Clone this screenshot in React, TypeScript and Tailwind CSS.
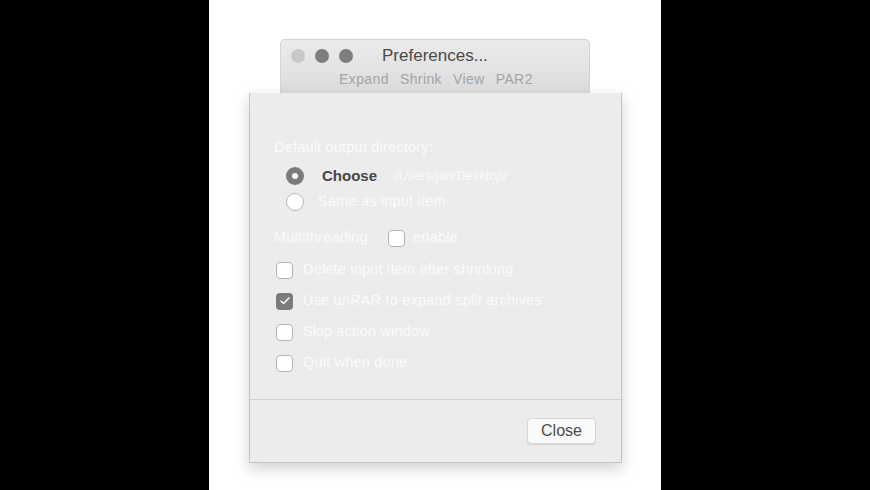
import { Check } from 'lucide-react'

const font = { fontFamily: '"Liberation Sans", Arial, sans-serif' }

function Radio({ checked }: { checked?: boolean }) {
  return checked ? (
    <span className="flex h-[18px] w-[18px] shrink-0 items-center justify-center rounded-full bg-[#7b7b7b]">
      <span className="h-[6px] w-[6px] rounded-full bg-white" />
    </span>
  ) : (
    <span className="block h-[18px] w-[18px] shrink-0 rounded-full border border-[#b8b8b8] bg-white" />
  )
}

function Box({ checked }: { checked?: boolean }) {
  return checked ? (
    <span className="flex h-[17px] w-[17px] shrink-0 items-center justify-center rounded-[4px] bg-[#7b7b7b]">
      <Check className="h-3 w-3 text-white" strokeWidth={3} />
    </span>
  ) : (
    <span className="block h-[17px] w-[17px] shrink-0 rounded-[4px] border border-[#b3b3b3] bg-white" />
  )
}

const options = [
  { label: 'Delete input item after shrinking', checked: false },
  { label: 'Use unRAR to expand split archives', checked: true },
  { label: 'Skip action window', checked: false },
  { label: 'Quit when done', checked: false },
]

export default function App() {
  return (
    <div className="flex h-[490px] w-[870px] justify-center bg-black" style={font}>
      <div className="flex h-full w-[452px] flex-col bg-white">
        {/* window title bar */}
        <div className="ml-[71px] mt-[39px] h-[54px] w-[310px] rounded-t-[5px] border border-b-0 border-[#d4d4d4] bg-gradient-to-b from-[#ebebeb] to-[#dcdcdc]">
          <div className="flex h-[31px] items-center pl-[10px]">
            <span className="h-[14px] w-[14px] rounded-full bg-[#c9c9c9]" />
            <span className="ml-[10px] h-[14px] w-[14px] rounded-full bg-[#7e7e7e]" />
            <span className="ml-[10px] h-[14px] w-[14px] rounded-full bg-[#7e7e7e]" />
            <span className="ml-[29px] text-[17px] text-[#4a4a4a]">Preferences...</span>
          </div>
          <div className="-mt-[2px] flex gap-[11px] pl-[58px] text-[14px] tracking-[0.4px] text-[#a4a4a4]">
            <span>Expand</span>
            <span>Shrink</span>
            <span>View</span>
            <span>PAR2</span>
          </div>
        </div>

        {/* sheet */}
        <div className="ml-[40px] flex h-[370px] w-[373px] flex-col border-x border-b border-[#c4c4c4] bg-[#ececec] shadow-[0_6px_14px_rgba(0,0,0,0.18)]">
          <div className="flex flex-col px-[25px] pt-[45px] text-[14.5px] tracking-[0.2px] text-[#fbfbfb]">
            <div className="-ml-[1px] leading-[18px]">Default output directory:</div>
            <div className="mt-[11px] flex h-[18px] items-center pl-[11px]">
              <Radio checked />
              <span className="ml-[18px] text-[15px] font-bold tracking-normal text-[#464646]">Choose</span>
              <span className="ml-[18px] text-[12px] italic tracking-[0.4px]">/Users/jon/Desktop/</span>
            </div>
            <div className="mt-[8px] flex h-[18px] items-center pl-[11px]">
              <Radio />
              <span className="ml-[14px]">Same as input item</span>
            </div>
            <div className="mt-[18px] flex h-[18px] items-center">
              <span className="-ml-[1px]">Multithreading:</span>
              <span className="ml-[16px]">
                <Box />
              </span>
              <span className="ml-[8px]">enable</span>
            </div>
            <div className="mt-[14px] flex flex-col gap-[13px] pl-[1px]">
              {options.map((o) => (
                <div key={o.label} className="flex h-[18px] items-center">
                  <Box checked={o.checked} />
                  <span className="ml-[10px]">{o.label}</span>
                </div>
              ))}
            </div>
          </div>
          <div className="mt-auto h-[63px] border-t border-[#d2d2d2]">
            <div className="flex justify-end pr-[25px] pt-[18px]">
              <button
                type="button"
                className="h-[26px] w-[69px] rounded-[4px] border border-[#d6d6d6] bg-[#fafafa] text-[16px] text-[#4a4a4a] shadow-[0_1px_1px_rgba(0,0,0,0.1)]"
              >
                Close
              </button>
            </div>
          </div>
        </div>
      </div>
    </div>
  )
}
